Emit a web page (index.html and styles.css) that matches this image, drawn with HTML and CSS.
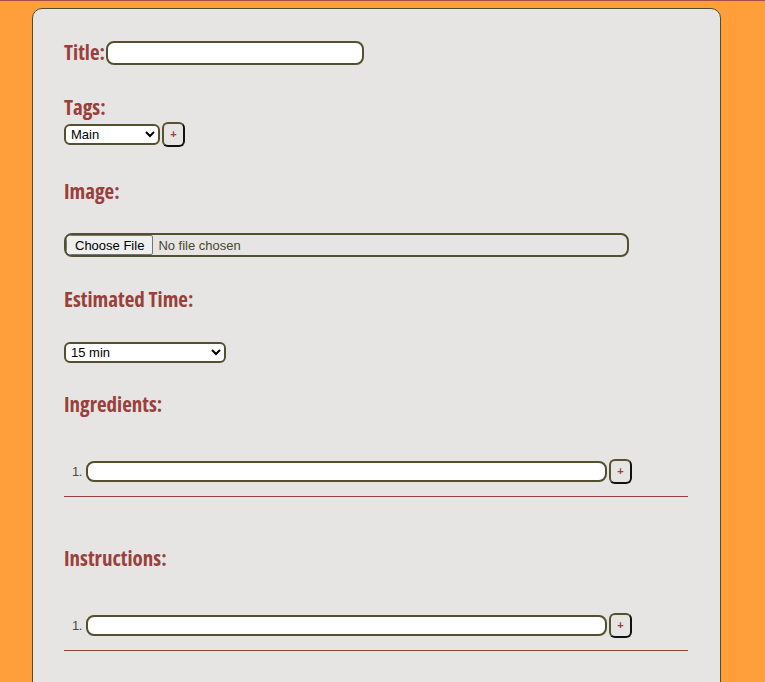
FILE: index.html
```html
<!DOCTYPE html>
<html lang="en">
<head>
<meta charset="utf-8">
<title>New Recipe</title>
<link rel="stylesheet" href="styles.css">
</head>
<body>
<main class="card">
  <form class="recipe-form">
    <div class="title-row">
      <label class="label" for="title">Title:</label>
      <input class="text-input title-input" id="title" type="text">
    </div>

    <label class="label tags-label" for="tags">Tags:</label>
    <div class="tags-row">
      <select class="select tags-select" id="tags">
        <option>Main</option>
      </select>
      <button type="button" class="add-btn">+</button>
    </div>

    <label class="label image-label" for="image">Image:</label>
    <input class="file-input" id="image" type="file">

    <label class="label time-label" for="time">Estimated Time:</label>
    <select class="select time-select" id="time">
      <option>15 min</option>
    </select>

    <label class="label section-label">Ingredients:</label>
    <ol class="item-list">
      <li class="item-row">
        <span class="item-num">1.</span>
        <input class="text-input item-input" type="text">
        <button type="button" class="add-btn">+</button>
      </li>
    </ol>
    <hr class="divider">

    <label class="label section-label instructions-label">Instructions:</label>
    <ol class="item-list">
      <li class="item-row">
        <span class="item-num">1.</span>
        <input class="text-input item-input" type="text">
        <button type="button" class="add-btn">+</button>
      </li>
    </ol>
    <hr class="divider">
  </form>
</main>
</body>
</html>
```
FILE: styles.css
```css
html, body {
  margin: 0;
  padding: 0;
}

body {
  background: #ff9f3b;
  border-top: 1px solid #9f4f4a;
  padding: 7px 0 0 32px;
  font-family: "Liberation Sans", Arial, sans-serif;
  overflow: hidden;
  height: 682px;
  box-sizing: border-box;
}

.card {
  width: 689px;
  min-height: 720px;
  box-sizing: border-box;
  background: #e6e5e3;
  border: 1px solid #4f4b2e;
  border-radius: 10px;
  padding: 32px 32px 40px 31px;
}

.recipe-form {
  display: flex;
  flex-direction: column;
  align-items: flex-start;
}

.label {
  display: block;
  font-family: "Open Sans", "Liberation Sans", sans-serif;
  font-stretch: 77%;
  font-weight: 700;
  font-size: 21px;
  line-height: 22px;
  padding-bottom: 2px;
  color: #9a3f3b;
}

.title-row {
  display: flex;
  align-items: center;
  height: 24px;
}

.text-input {
  box-sizing: border-box;
  border: 2px solid #544f2f;
  border-radius: 8px;
  background: #fff;
  font-family: "Liberation Sans", Arial, sans-serif;
  font-size: 13px;
  padding: 0 6px;
  margin: 0;
}

.title-input {
  width: 258px;
  height: 24px;
  margin-left: 1px;
}

.tags-label {
  margin-top: 31px;
}

.tags-row {
  display: flex;
  align-items: center;
  gap: 2px;
  margin-top: 2px;
}

.select {
  box-sizing: border-box;
  border: 2px solid #544f2f;
  border-radius: 6px;
  background: #fff;
  font-family: "Liberation Sans", Arial, sans-serif;
  font-size: 13px;
  color: #000;
  margin: 0;
  padding: 0 1px;
}

.tags-select {
  width: 96px;
  height: 21px;
}

.add-btn {
  box-sizing: border-box;
  width: 23px;
  height: 25px;
  padding: 0;
  margin: 0;
  background: transparent;
  border: 2px solid;
  border-color: #57522f #111 #111 #57522f;
  border-radius: 6px;
  color: #9a3f3b;
  font-family: "Liberation Sans", Arial, sans-serif;
  font-weight: 700;
  font-size: 11px;
  line-height: 1;
}

.image-label {
  margin-top: 33px;
}

.file-input {
  box-sizing: border-box;
  width: 565px;
  height: 24px;
  margin-top: 29px;
  border: 2px solid #544f2f;
  border-radius: 8px;
  font-family: "Liberation Sans", Arial, sans-serif;
  font-size: 13px;
  color: #4a4630;
  padding: 0;
}

.file-input::file-selector-button {
  font-family: "Liberation Sans", Arial, sans-serif;
  font-size: 13px;
  height: 20px;
  margin: 0 5px 0 0;
  padding: 0 8px;
  border: 1px solid #767676;
  border-radius: 2px;
  background: #efefef;
  color: #000;
}

.time-label {
  margin-top: 31px;
}

.time-select {
  width: 162px;
  height: 21px;
  margin-top: 30px;
}

.section-label {
  margin-top: 30px;
}

.item-list {
  list-style: none;
  margin: 42px 0 0;
  padding: 0;
  width: 100%;
}

.item-row {
  display: flex;
  align-items: center;
  height: 25px;
}

.item-num {
  box-sizing: border-box;
  width: 22px;
  padding-left: 8px;
  font-family: "Liberation Sans", Arial, sans-serif;
  font-size: 13px;
  color: #4d4b3f;
  letter-spacing: -0.5px;
}

.item-input {
  width: 521px;
  height: 21px;
  margin-right: 2px;
}

.divider {
  width: 624px;
  margin: 12px 0 0;
  border: 0;
  border-top: 1px solid #9a3f3b;
  height: 0;
}

.instructions-label {
  margin-top: 50px;
}
```
